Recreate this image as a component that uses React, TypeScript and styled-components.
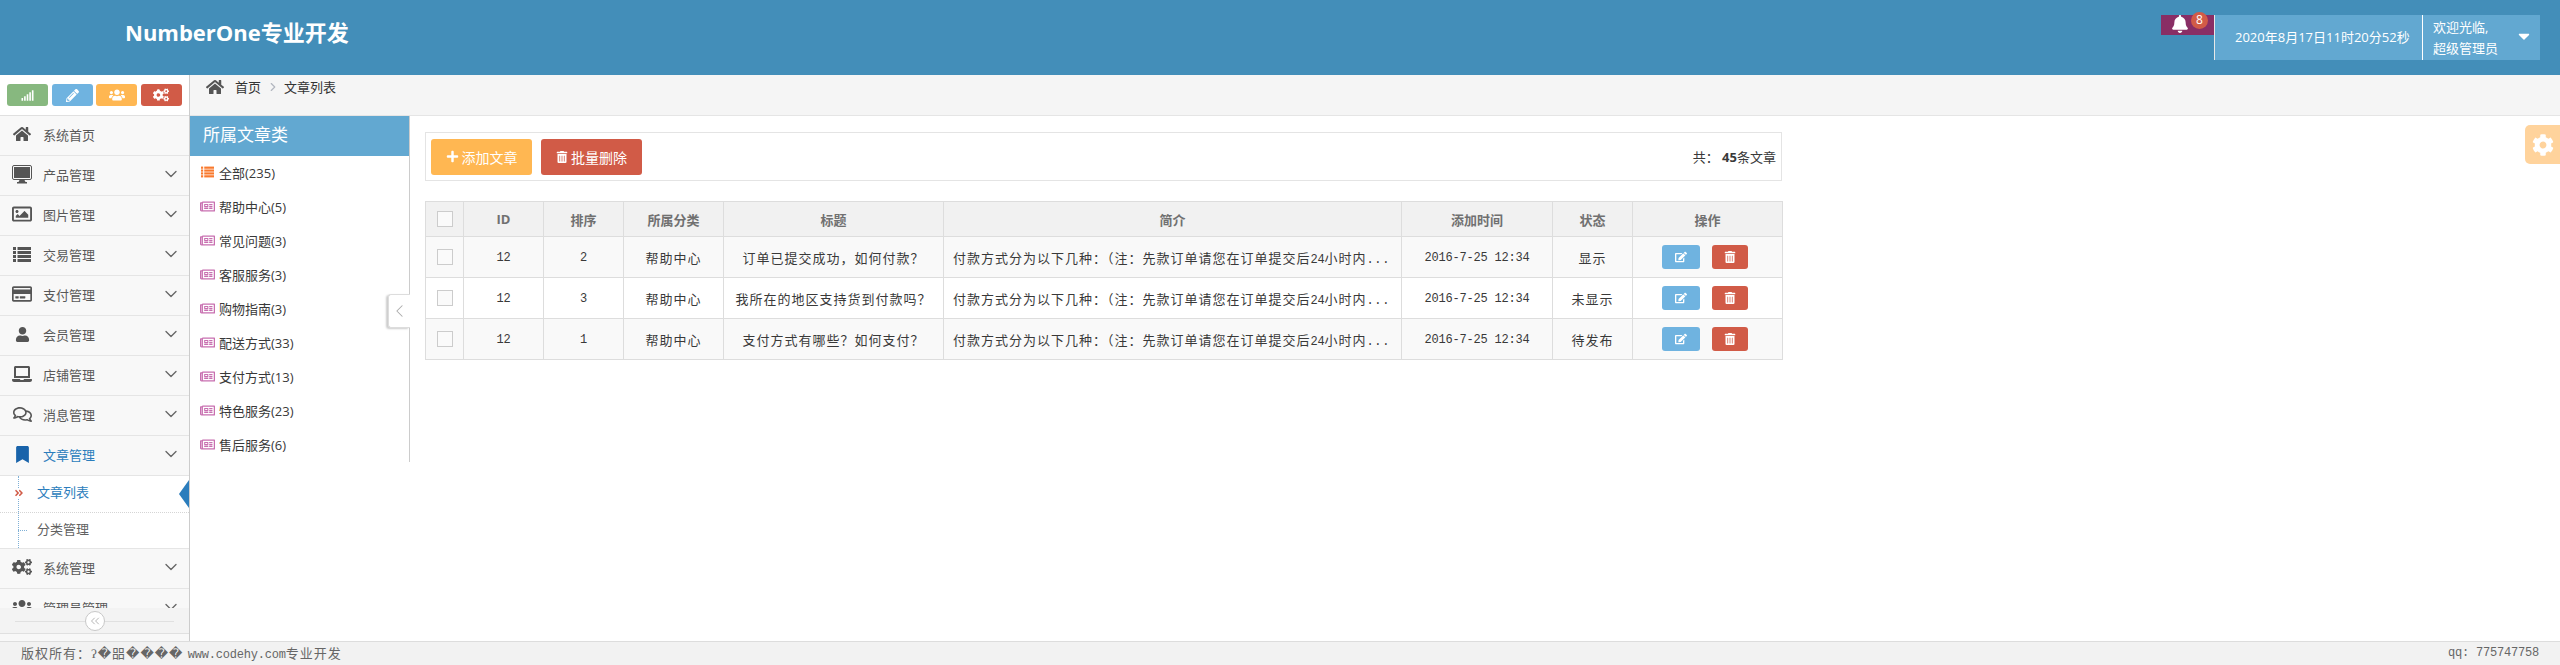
import React from 'react';
import styled, { createGlobalStyle } from 'styled-components';
import {
  FaAngleDoubleRight, FaBell, FaBookmark, FaCaretDown,
  FaCog, FaCogs, FaEdit, FaHome, FaLaptop, FaPencilAlt, FaPlus, FaRegComments, FaRegCreditCard,
  FaRegImage, FaRegNewspaper, FaSignal, FaTrashAlt, FaUser, FaUsers,
} from 'react-icons/fa';
import { ChevronDown, ChevronLeft, ChevronRight, ChevronsLeft } from 'lucide-react';

const sansFont = `"Open Sans", "Noto Sans CJK SC", sans-serif`;
const cellFont = `"Liberation Serif", "Noto Sans CJK SC", "DejaVu Sans", serif`;

const GlobalStyle = createGlobalStyle`
  html, body {
    margin: 0;
    padding: 0;
    height: 665px;
    overflow: hidden;
    background: #fff;
    font-family: ${sansFont};
    font-size: 13px;
    color: #393939;
  }
  * { box-sizing: border-box; }
`;

const Page = styled.div`
  display: flex;
  flex-direction: column;
  height: 665px;
`;

const Header = styled.header`
  height: 75px;
  flex: none;
  background: #438eb9;
  display: flex;
  justify-content: space-between;
  padding: 0 20px 0 125px;
`;

const Logo = styled.div`
  color: #fff;
  font-size: 22px;
  font-weight: 700;
  line-height: 65px;
  letter-spacing: 0;
`;

const HeaderRight = styled.div`
  display: flex;
  align-items: flex-start;
  padding-top: 15px;
`;

const BellBox = styled.div`
  position: relative;
  width: 53px;
  height: 20px;
  background: #892e65;
  color: #fff;
  padding-left: 10px;
  font-size: 18px;
  line-height: 20px;
`;

const Badge = styled.span`
  position: absolute;
  left: 30px;
  top: -3px;
  width: 17px;
  height: 17px;
  border-radius: 50%;
  background: #d15b47;
  color: #fff;
  font-size: 12px;
  line-height: 16px;
  text-align: center;
`;

const TimeBox = styled.div`
  width: 208px;
  height: 45px;
  background: #62a8d1;
  border-left: 1px solid #e8e8e8;
  color: #fff;
  font-size: 13px;
  line-height: 44px;
  padding-left: 20px;
  white-space: nowrap;
`;

const UserBox = styled.div`
  width: 118px;
  height: 45px;
  background: #62a8d1;
  border-left: 1px solid #fff;
  color: #fff;
  font-size: 13px;
  line-height: 21px;
  padding: 0 0 0 10px;
  display: flex;
  justify-content: space-between;
  align-items: center;
`;

const UserCaret = styled.span`
  display: flex;
  font-size: 18px;
  margin: 0 7px 4px 0;
`;

const Main = styled.div`
  flex: 1;
  display: flex;
  min-height: 0;
  position: relative;
`;

const Sidebar = styled.aside`
  width: 190px;
  flex: none;
  border-right: 1px solid #ccc;
  background: #f8f8f8;
  display: flex;
  flex-direction: column;
  padding-bottom: 7px;
`;

const Shortcuts = styled.div`
  height: 41px;
  flex: none;
  background: #fff;
  border-bottom: 1px solid #e0e0e0;
  padding: 9px 7px 0;
  display: flex;
  justify-content: space-between;
  align-items: flex-start;
`;

const ShortcutButton = styled.span<{ $bg: string }>`
  width: 41px;
  height: 22px;
  border-radius: 3px;
  background: ${({ $bg }) => $bg};
  color: #fff;
  font-size: 13px;
  display: flex;
  align-items: center;
  justify-content: center;
`;

const Menu = styled.nav`
  flex: 1;
  min-height: 0;
  overflow: hidden;
`;

const MenuItem = styled.div<{ $active?: boolean }>`
  height: 40px;
  border-bottom: 1px solid #e5e5e5;
  display: flex;
  align-items: center;
  padding: 0 8px 3px 12px;
  color: ${({ $active }) => ($active ? '#2b7dbc' : '#585858')};
`;

const MenuIcon = styled.span<{ $active?: boolean }>`
  width: 20px;
  margin-right: 11px;
  display: flex;
  justify-content: center;
  font-size: 18px;
  color: ${({ $active }) => ($active ? '#1963aa' : '#555')};
`;

const MenuArrow = styled.span`
  margin-left: auto;
  display: flex;
  color: #666;
`;

const SubMenu = styled.div`
  position: relative;
  background: #fff;
  border-bottom: 1px solid #e5e5e5;
  &::before {
    content: '';
    position: absolute;
    left: 18px;
    top: 0;
    bottom: 0;
    border-left: 1px dotted #7fb0d6;
  }
`;

const SubItem = styled.div<{ $active?: boolean }>`
  position: relative;
  height: 36px;
  line-height: 33px;
  padding-left: 37px;
  color: ${({ $active }) => ($active ? '#2b7dbc' : '#616161')};
  & + & {
    border-top: 1px dotted #d5d5d5;
  }
`;

const SubDash = styled.span`
  position: absolute;
  left: 18px;
  top: 17px;
  width: 9px;
  border-top: 1px dotted #7fb0d6;
`;

const SubMark = styled.span`
  position: absolute;
  left: 14px;
  top: 12px;
  font-size: 10px;
  color: #d15b47;
  display: flex;
  background: #fff;
`;

const ActiveArrow = styled.span`
  position: absolute;
  right: 0;
  top: 4px;
  width: 0;
  height: 0;
  border-style: solid;
  border-width: 14px 10px 14px 0;
  border-color: transparent #2b7dbc transparent transparent;
`;

const CollapseBar = styled.div`
  position: relative;
  height: 26px;
  flex: none;
  background: #f3f3f3;
  border-bottom: 1px solid #e0e0e0;
  display: flex;
  align-items: center;
  justify-content: center;
  &::before {
    content: '';
    position: absolute;
    left: 15px;
    right: 15px;
    top: 13px;
    border-top: 1px solid #e0e0e0;
  }
`;

const CollapseButton = styled.span`
  position: relative;
  width: 20px;
  height: 20px;
  border-radius: 50%;
  background: #fff;
  border: 1px solid #c8c8c8;
  color: #aaa;
  display: flex;
  align-items: center;
  justify-content: center;
`;

const Content = styled.main`
  flex: 1;
  min-width: 0;
  display: flex;
  flex-direction: column;
`;

const Breadcrumb = styled.div`
  height: 41px;
  flex: none;
  background: #f5f5f5;
  border-bottom: 1px solid #e5e5e5;
  padding: 3px 0 0 16px;
  display: flex;
  align-items: flex-start;
  line-height: 16px;
  color: #333;
`;

const BreadcrumbHome = styled.span`
  display: flex;
  font-size: 18px;
  color: #555;
  margin-right: 11px;
`;

const BreadcrumbSep = styled.span`
  display: flex;
  align-items: center;
  height: 18px;
  color: #b2b6bf;
  margin: 0 4px 0 5px;
`;

const Crumb = styled.span`
  margin-top: 1px;
`;

const Body = styled.div`
  flex: 1;
  display: flex;
  align-items: flex-start;
  min-height: 0;
`;

const CategoryPanel = styled.section`
  position: relative;
  width: 220px;
  flex: none;
  border-right: 1px solid #ccc;
`;

const CategoryTitle = styled.div`
  height: 40px;
  background: #62a8d1;
  color: #fff;
  font-size: 17px;
  line-height: 38px;
  padding-left: 13px;
`;

const CategoryRow = styled.div`
  height: 34px;
  display: flex;
  align-items: center;
  padding: 0 0 2px 10px;
  color: #393939;
  font-size: 13px;
`;

const CategoryIcon = styled.span<{ $color: string }>`
  width: 15px;
  margin-right: 4px;
  display: flex;
  justify-content: center;
  font-size: 15px;
  color: ${({ $color }) => $color};
`;

const PanelToggle = styled.span`
  position: absolute;
  right: -1px;
  top: 178px;
  width: 22px;
  height: 34px;
  background: #fff;
  border: 1px solid #ddd;
  border-right: none;
  border-radius: 3px 0 0 3px;
  box-shadow: -2px 1px 2px rgba(0, 0, 0, 0.2);
  color: #aaa;
  display: flex;
  align-items: center;
  justify-content: center;
`;

const ListArea = styled.section`
  width: 1372px;
  padding: 16px 0 0 15px;
`;

const Toolbar = styled.div`
  height: 49px;
  border: 1px solid #e4e4e4;
  display: flex;
  align-items: center;
  justify-content: space-between;
  padding: 0 5px;
`;

const ToolbarButtons = styled.div`
  display: flex;
  gap: 9px;
`;

const ToolButton = styled.span<{ $bg: string }>`
  width: 101px;
  height: 36px;
  border-radius: 3px;
  background: ${({ $bg }) => $bg};
  color: #fff;
  font-size: 14px;
  display: flex;
  align-items: center;
  justify-content: center;
  gap: 3px;
`;

const Total = styled.span`
  font-size: 13px;
  color: #393939;
  b { font-weight: 700; }
`;

const Table = styled.table`
  width: 100%;
  margin-top: 20px;
  table-layout: fixed;
  border-collapse: collapse;
  border: 1px solid #ddd;
`;

const HeadCell = styled.th`
  height: 35px;
  background: #f1f1f1;
  border: 1px solid #ddd;
  color: #707070;
  font-size: 13px;
  font-weight: 700;
  text-align: center;
  padding: 0;
`;

const Row = styled.tr`
  background: #fff;
  &:nth-child(odd) {
    background: #f9f9f9;
  }
`;

const Cell = styled.td<{ $left?: boolean }>`
  height: 41px;
  border: 1px solid #ddd;
  font-family: ${cellFont};
  font-size: 13px;
  letter-spacing: 1px;
  color: #393939;
  text-align: ${({ $left }) => ($left ? 'left' : 'center')};
  padding: ${({ $left }) => ($left ? '0 0 0 9px' : '0')};
  white-space: nowrap;
  overflow: hidden;
`;

const Mono = styled.span`
  font-family: "Liberation Mono", monospace;
  font-size: 12px;
  letter-spacing: -0.2px;
`;

const Dots = styled(Mono)`
  letter-spacing: 0.6px;
`;

const CheckBox = styled.span`
  display: block;
  width: 16px;
  height: 16px;
  margin: 0 auto;
  border: 1px solid #ccc;
  background: #fafafa;
`;

const ActionGroup = styled.div`
  display: flex;
  justify-content: center;
  gap: 12px;
  padding-right: 6px;
`;

const ActionButton = styled.span<{ $bg: string; $width: number }>`
  width: ${({ $width }) => $width}px;
  height: 24px;
  border-radius: 3px;
  background: ${({ $bg }) => $bg};
  color: #fff;
  font-size: 12px;
  display: flex;
  align-items: center;
  justify-content: center;
`;

const SettingsTab = styled.span`
  position: absolute;
  right: 0;
  top: 50px;
  width: 35px;
  height: 39px;
  background: #ffd39c;
  border-radius: 5px 0 0 5px;
  color: #fff;
  font-size: 22px;
  display: flex;
  align-items: center;
  justify-content: center;
`;

const Footer = styled.footer`
  height: 24px;
  flex: none;
  background: #f2f2f2;
  border-top: 1px solid #ddd;
  padding: 0 21px 2px;
  display: flex;
  align-items: center;
  justify-content: space-between;
  font-family: ${cellFont};
  font-size: 13px;
  letter-spacing: 1px;
  color: #666;
  white-space: nowrap;
`;

const DesktopIcon = () => (
  <svg width="20" height="19" viewBox="0 0 20 19">
    <rect x="0.5" y="0.5" width="19" height="14" rx="1.5" fill="none" stroke="#555" />
    <rect x="2" y="2" width="16" height="11" fill="#555" />
    <path d="M7.5 15h5l1 2h1.5v1.5H5V17h1.5z" fill="#555" />
  </svg>
);

// fa-list from the old icon set: four rows, small square then long bar
const RowsIcon = ({ width, height }: { width: number; height: number }) => (
  <svg width={width} height={height} viewBox="0 0 18 15" fill="currentColor">
    {[0, 4, 8, 12].map((y) => (
      <g key={y}>
        <rect x="0" y={y} width="3" height="3" />
        <rect x="4.5" y={y} width="13.5" height="3" />
      </g>
    ))}
  </svg>
);

const menuTop = [
  { label: '系统首页', icon: <FaHome />, arrow: false },
  { label: '产品管理', icon: <DesktopIcon />, arrow: true },
  { label: '图片管理', icon: <FaRegImage size={20} />, arrow: true },
  { label: '交易管理', icon: <RowsIcon width={18} height={15} />, arrow: true },
  { label: '支付管理', icon: <FaRegCreditCard size={20} />, arrow: true },
  { label: '会员管理', icon: <FaUser size={15} />, arrow: true },
  { label: '店铺管理', icon: <FaLaptop size={20} />, arrow: true },
  { label: '消息管理', icon: <FaRegComments size={19} />, arrow: true },
];

const categories = ['帮助中心(5)', '常见问题(3)', '客服服务(3)', '购物指南(3)', '配送方式(33)', '支付方式(13)', '特色服务(23)', '售后服务(6)'];

const columns = [
  { label: '', width: 38 },
  { label: 'ID', width: 80 },
  { label: '排序', width: 80 },
  { label: '所属分类', width: 100 },
  { label: '标题', width: 220 },
  { label: '简介', width: 458 },
  { label: '添加时间', width: 151 },
  { label: '状态', width: 80 },
  { label: '操作', width: 150 },
];

const rows = [
  { sort: 2, title: '订单已提交成功，如何付款？', status: '显示' },
  { sort: 3, title: '我所在的地区支持货到付款吗？', status: '未显示' },
  { sort: 1, title: '支付方式有哪些？如何支付？', status: '待发布' },
];

const Arrow = () => (
  <MenuArrow><ChevronDown size={20} strokeWidth={1.6} /></MenuArrow>
);

export default function App() {
  return (
    <Page>
      <GlobalStyle />
      <Header>
        <Logo>NumberOne专业开发</Logo>
        <HeaderRight>
          <BellBox>
            <FaBell />
            <Badge>8</Badge>
          </BellBox>
          <TimeBox>2020年8月17日11时20分52秒</TimeBox>
          <UserBox>
            <span>欢迎光临,<br />超级管理员</span>
            <UserCaret><FaCaretDown /></UserCaret>
          </UserBox>
        </HeaderRight>
      </Header>
      <Main>
        <Sidebar>
          <Shortcuts>
            <ShortcutButton $bg="#87b87f"><FaSignal /></ShortcutButton>
            <ShortcutButton $bg="#6fb3e0"><FaPencilAlt /></ShortcutButton>
            <ShortcutButton $bg="#ffb752"><FaUsers size={16} /></ShortcutButton>
            <ShortcutButton $bg="#d15b47"><FaCogs size={16} /></ShortcutButton>
          </Shortcuts>
          <Menu>
            {menuTop.map((item) => (
              <MenuItem key={item.label}>
                <MenuIcon>{item.icon}</MenuIcon>
                {item.label}
                {item.arrow && <Arrow />}
              </MenuItem>
            ))}
            <MenuItem $active>
              <MenuIcon $active><FaBookmark size={17} /></MenuIcon>
              文章管理
              <Arrow />
            </MenuItem>
            <SubMenu>
              <SubItem $active>
                <SubMark><FaAngleDoubleRight /></SubMark>
                文章列表
                <ActiveArrow />
              </SubItem>
              <SubItem>
                <SubDash />
                分类管理
              </SubItem>
            </SubMenu>
            <MenuItem>
              <MenuIcon><FaCogs size={20} /></MenuIcon>
              系统管理
              <Arrow />
            </MenuItem>
            <MenuItem>
              <MenuIcon><FaUsers size={20} /></MenuIcon>
              管理员管理
              <Arrow />
            </MenuItem>
          </Menu>
          <CollapseBar>
            <CollapseButton><ChevronsLeft size={14} strokeWidth={1.5} /></CollapseButton>
          </CollapseBar>
        </Sidebar>
        <Content>
          <Breadcrumb>
            <BreadcrumbHome><FaHome /></BreadcrumbHome>
            <Crumb>首页</Crumb>
            <BreadcrumbSep><ChevronRight size={14} strokeWidth={2} /></BreadcrumbSep>
            <Crumb>文章列表</Crumb>
          </Breadcrumb>
          <Body>
            <CategoryPanel>
              <CategoryTitle>所属文章类</CategoryTitle>
              <CategoryRow>
                <CategoryIcon $color="#f97a2e"><RowsIcon width={13} height={12} /></CategoryIcon>
                全部(235)
              </CategoryRow>
              {categories.map((name) => (
                <CategoryRow key={name}>
                  <CategoryIcon $color="#c86fb0"><FaRegNewspaper /></CategoryIcon>
                  {name}
                </CategoryRow>
              ))}
              <PanelToggle><ChevronLeft size={24} strokeWidth={1.2} /></PanelToggle>
            </CategoryPanel>
            <ListArea>
              <Toolbar>
                <ToolbarButtons>
                  <ToolButton $bg="#ffb752"><FaPlus size={13} />添加文章</ToolButton>
                  <ToolButton $bg="#d15b47"><FaTrashAlt size={12} />批量删除</ToolButton>
                </ToolbarButtons>
                <Total>共： <b>45</b>条文章</Total>
              </Toolbar>
              <Table>
                <colgroup>
                  {columns.map((col) => (
                    <col key={col.label} width={col.width} />
                  ))}
                </colgroup>
                <thead>
                  <tr>
                    {columns.map((col) => (
                      <HeadCell key={col.label}>{col.label || <CheckBox />}</HeadCell>
                    ))}
                  </tr>
                </thead>
                <tbody>
                  {rows.map((row) => (
                    <Row key={row.sort}>
                      <Cell><CheckBox /></Cell>
                      <Cell><Mono>12</Mono></Cell>
                      <Cell><Mono>{row.sort}</Mono></Cell>
                      <Cell>帮助中心</Cell>
                      <Cell>{row.title}</Cell>
                      <Cell $left>付款方式分为以下几种：（注：先款订单请您在订单提交后<Mono>24</Mono>小时内<Dots>...</Dots></Cell>
                      <Cell><Mono>2016-7-25 12:34</Mono></Cell>
                      <Cell>{row.status}</Cell>
                      <Cell>
                        <ActionGroup>
                          <ActionButton $bg="#6fb3e0" $width={38}><FaEdit /></ActionButton>
                          <ActionButton $bg="#d15b47" $width={36}><FaTrashAlt /></ActionButton>
                        </ActionGroup>
                      </Cell>
                    </Row>
                  ))}
                </tbody>
              </Table>
            </ListArea>
          </Body>
        </Content>
        <SettingsTab><FaCog /></SettingsTab>
      </Main>
      <Footer>
        <span>版权所有：ʔ�㗊���� <Mono>www.codehy.com</Mono>专业开发</span>
        <Mono>qq: 775747758</Mono>
      </Footer>
    </Page>
  );
}
